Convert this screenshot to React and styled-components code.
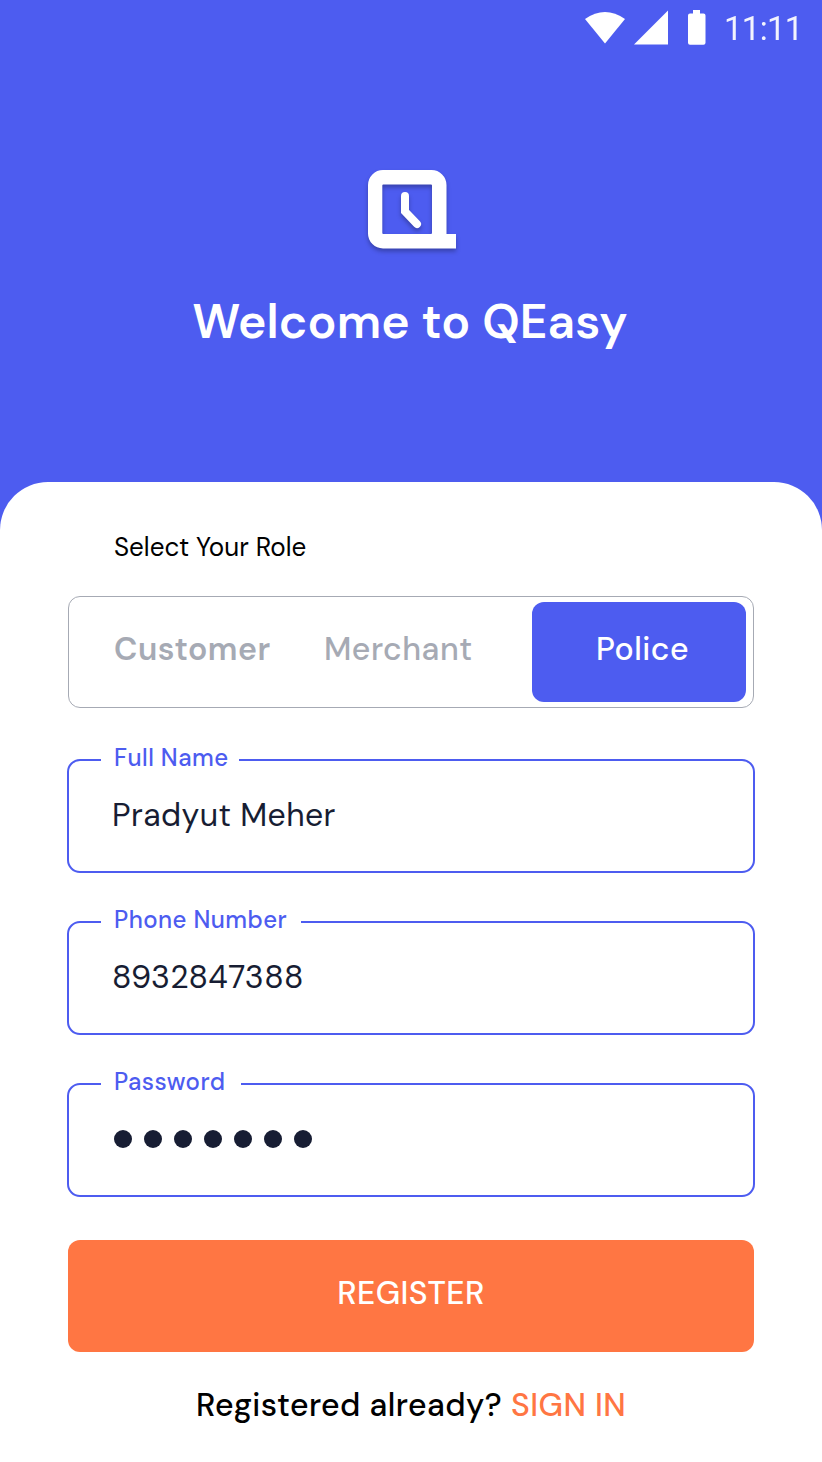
import React from "react";
import styled, { createGlobalStyle } from "styled-components";

const Global = createGlobalStyle`
  *, *::before, *::after { box-sizing: border-box; }
  body {
    margin: 0;
    background: #4d5cf0;
    font-family: "DM Sans", Inter, "Liberation Sans", sans-serif;
  }
`;

const Screen = styled.main`
  display: flex;
  flex-direction: column;
  width: 822px;
  height: 1462px;
  background: #4d5cf0;
  overflow: hidden;
`;

const StatusBar = styled.div`
  display: flex;
  justify-content: flex-end;
  height: 56px;
  padding-right: 18px;
  color: #fff;
`;

const StatusIcons = styled.svg`
  width: 121px;
  height: 56px;
  margin-right: 18px;
  fill: currentColor;
`;

const Clock = styled.span`
  width: 80px;
  font: 400 33px/57px Roboto, sans-serif;
  letter-spacing: -0.7px;
  opacity: 0.93;
  white-space: nowrap;
`;

const Hero = styled.header`
  display: flex;
  flex-direction: column;
  align-items: center;
  height: 426px;
  padding-top: 104px;
  color: #fff;
`;

const Logo = styled.svg`
  width: 110px;
  height: 110px;
  filter: drop-shadow(0 3px 2px rgba(0, 0, 0, 0.28));
`;

const Title = styled.h1`
  margin: 21px 0 0;
  padding-right: 2px;
  font-size: 48px;
  font-weight: 600;
  line-height: 62px;
  letter-spacing: 0.1px;
  white-space: nowrap;
`;

const Sheet = styled.form`
  display: flex;
  flex-direction: column;
  flex: 1;
  padding: 49px 67px 0;
  background: #fff;
  border-radius: 48px 48px 0 0;
`;

const Prompt = styled.p`
  margin: 0 0 33px 47px;
  font-size: 26px;
  line-height: 32px;
  letter-spacing: 0;
  color: #000;
`;

const Roles = styled.div`
  display: flex;
  align-items: center;
  height: 112px;
  margin: 0 1px 51px;
  padding: 0 7px 0 45px;
  border: 1px solid #a6aab4;
  border-radius: 12px;
`;

const Role = styled.span`
  width: ${(p) => p.$width}px;
  font-size: 32px;
  font-weight: ${(p) => p.$weight};
  line-height: 40px;
  letter-spacing: 0.5px;
  padding-bottom: 6px;
  color: #a6aab4;
  white-space: nowrap;
`;

const ActiveRole = styled(Role)`
  height: 100px;
  margin-left: auto;
  padding: 27px 0 0 64px;
  border-radius: 12px;
  background: #4d5cf0;
  color: #fff;
`;

const Field = styled.div`
  position: relative;
  display: flex;
  align-items: center;
  height: 114px;
  margin-bottom: 48px;
  padding: 0 43px 2px;
  border: 2px solid #4d5cf0;
  border-radius: 13px;
`;

const FieldLabel = styled.label`
  position: absolute;
  top: -19px;
  left: 32px;
  width: ${(p) => p.$width}px;
  padding-left: 13px;
  background: #fff;
  font-size: 24px;
  font-weight: 500;
  line-height: 32px;
  letter-spacing: 0.45px;
  color: #4d5cf0;
  white-space: nowrap;
`;

const Value = styled.span`
  font-size: 32px;
  line-height: 40px;
  letter-spacing: 0.4px;
  color: #171d33;
`;

const Dots = styled.div`
  display: flex;
  gap: 12px;
  margin-left: 2px;
`;

const Dot = styled.i`
  width: 18px;
  height: 18px;
  border-radius: 50%;
  background: #171d33;
`;

const Register = styled.button`
  height: 112px;
  margin: -5px 1px 0;
  padding: 0 0 6px;
  border: 0;
  border-radius: 12px;
  background: #ff7643;
  color: #fff;
  font: inherit;
  font-size: 32px;
  font-weight: 500;
  letter-spacing: 0.4px;
`;

const Footer = styled.p`
  display: flex;
  margin: 33px 0 0 129px;
  font-size: 32px;
  font-weight: 500;
  line-height: 40px;
  letter-spacing: 0.45px;
  color: #000;
  white-space: nowrap;
`;

const Question = styled.span`
  width: 315px;
`;

const SignIn = styled.a`
  color: #ff7643;
`;

export default function App() {
  return (
    <Screen>
      <Global />
      <StatusBar>
        <StatusIcons viewBox="585 0 121 56">
          <path d="M585 19Q605 5 625 19L605 43.5Z" />
          <path d="M634 44.5H668V10.5Z" />
          <path d="M693 10h7v3.5h3.5a2 2 0 0 1 2 2v27.2a2 2 0 0 1-2 2H690a2 2 0 0 1-2-2V15.500a2 2 0 0 1 2-2h3Z" />
        </StatusIcons>
        <Clock>11:11</Clock>
      </StatusBar>
      <Hero>
        <Logo viewBox="356 160 110 110">
          <path
            fill="#fff"
            fillRule="evenodd"
            d="M383 170h48.500a15 15 0 0 1 15 15v49H456v14.500H383a15 15 0 0 1-15-15V185a15 15 0 0 1 15-15ZM383.300 184.500a1 1 0 0 0-1 1V233a1 1 0 0 0 1 1H431a1 1 0 0 0 1-1V185.500a1 1 0 0 0-1-1Z"
          />
          <path
            d="M405 196V211.500L417 224"
            fill="none"
            stroke="#fff"
            strokeWidth="8"
            strokeLinecap="round"
          />
        </Logo>
        <Title>Welcome to QEasy</Title>
      </Hero>
      <Sheet>
        <Prompt>Select Your Role</Prompt>
        <Roles>
          <Role $width={210} $weight={600}>Customer</Role>
          <Role $width={160} $weight={500}>Merchant</Role>
          <ActiveRole $width={214} $weight={500}>Police</ActiveRole>
        </Roles>
        <Field>
          <FieldLabel $width={138}>Full Name</FieldLabel>
          <Value>Pradyut Meher</Value>
        </Field>
        <Field>
          <FieldLabel $width={200}>Phone Number</FieldLabel>
          <Value>8932847388</Value>
        </Field>
        <Field>
          <FieldLabel $width={140}>Password</FieldLabel>
          <Dots>
            {Array.from({ length: 7 }, (_, i) => (
              <Dot key={i} />
            ))}
          </Dots>
        </Field>
        <Register type="button">REGISTER</Register>
        <Footer>
          <Question>Registered already?</Question>
          <SignIn>SIGN IN</SignIn>
        </Footer>
      </Sheet>
    </Screen>
  );
}
